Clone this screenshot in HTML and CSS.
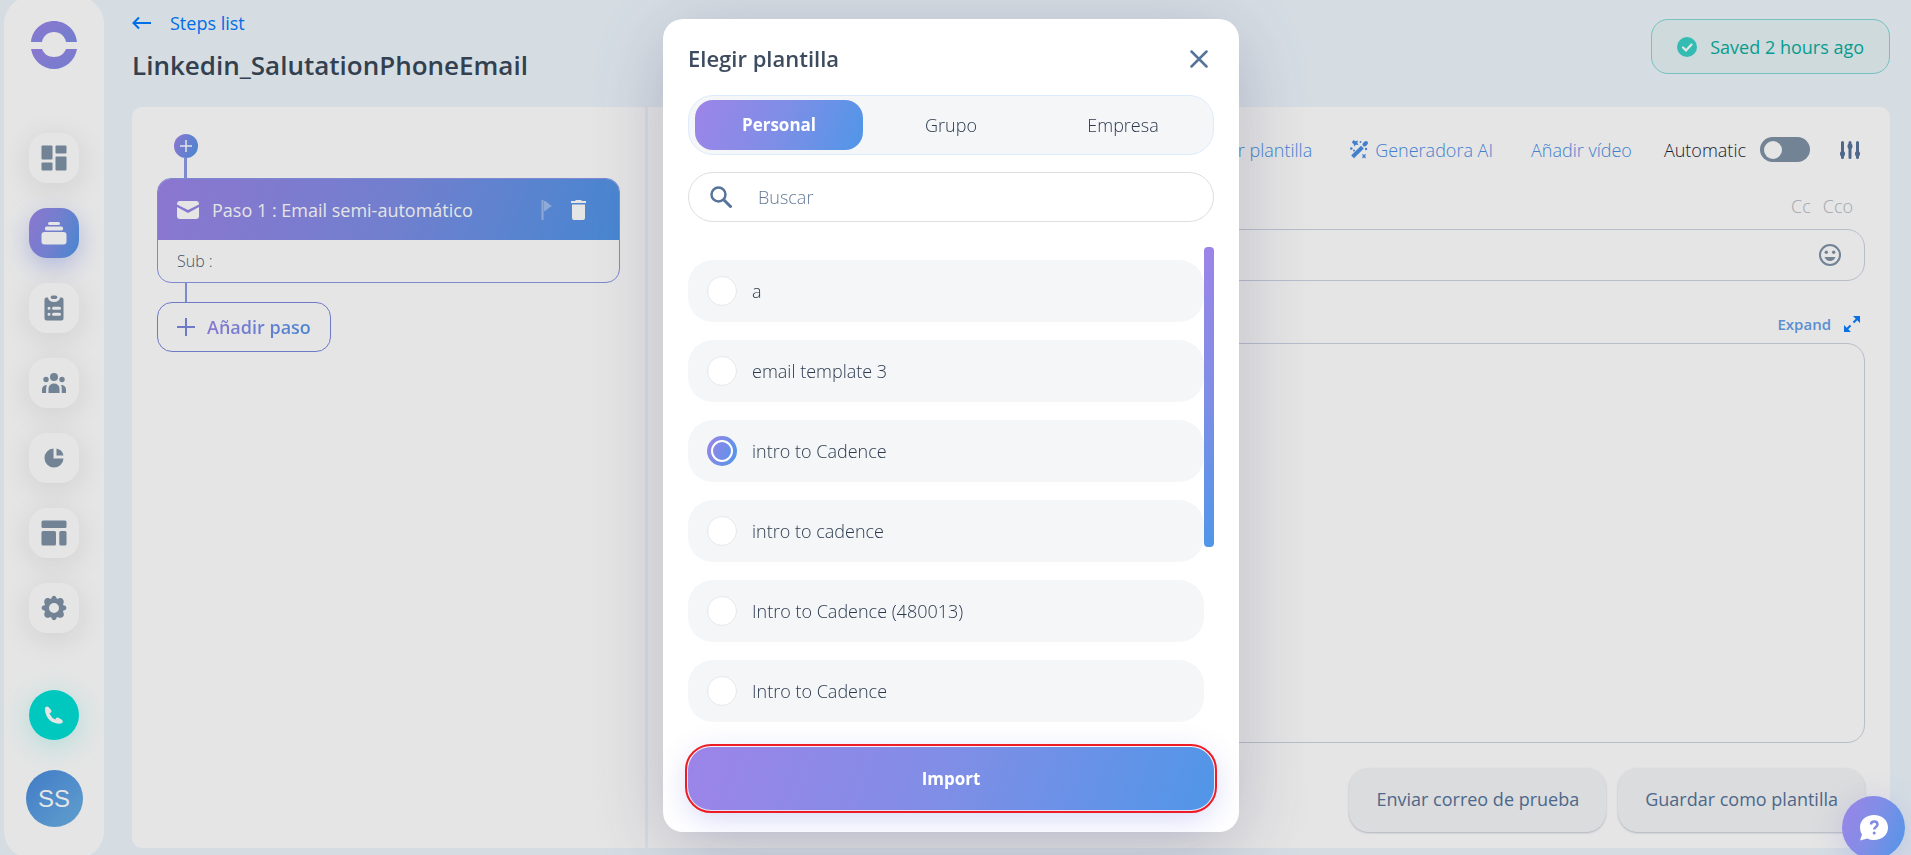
FILE: index.html
```
<!DOCTYPE html>
<html lang="es">
<head>
    <meta charset="UTF-8">
    <meta name="viewport" content="width=device-width, initial-scale=1.0">
    <title>Linkedin_SalutationPhoneEmail</title>
    <link rel="stylesheet" href="styles.css">
</head>
<body>
    <!-- Shared gradient for the icons -->
    <svg class="defs" width="0" height="0" aria-hidden="true">
        <defs>
            <linearGradient id="brand" x1="0" y1="0" x2="1" y2="1">
                <stop offset="0" stop-color="#9c84e8"/>
                <stop offset="1" stop-color="#7f8ee6"/>
            </linearGradient>
        </defs>
    </svg>

    <div class="app">
        <!-- Sidebar -->
        <aside class="sidebar">
            <svg class="logo" width="48" height="48" viewBox="0 0 48 48" fill="url(#brand)">
                <path d="M1 21C2 9 12 0 24 0s22 9 23 21H36c-1-6-6-10-12-10S13 15 12 21z"/>
                <path d="M1 28c2 12 12 20 23 20s21-8 23-20H36c-2 5-6 8-12 8s-10-3-12-8z"/>
            </svg>
            <nav class="nav">
                <a class="nav-item" href="#" aria-label="Panel">
                    <svg width="26" height="26" viewBox="0 0 26 26"><rect x="0.500" y="0.500" width="11" height="14" rx="1"/><rect x="14.500" y="0.500" width="11" height="8" rx="1"/><rect x="0.500" y="17.500" width="11" height="8" rx="1"/><rect x="14.500" y="11.500" width="11" height="14" rx="1"/></svg>
                </a>
                <a class="nav-item active" href="#" aria-label="Cadencias">
                    <svg width="26" height="26" viewBox="0 0 26 26"><rect x="7" y="2" width="12" height="3" rx="1.500"/><rect x="4" y="6.500" width="18" height="4" rx="1.500"/><rect x="0.500" y="12" width="25" height="12.500" rx="3"/></svg>
                </a>
                <a class="nav-item" href="#" aria-label="Tareas">
                    <svg width="26" height="26" viewBox="0 0 26 26"><path fill-rule="evenodd" d="M5.500 2.500H7a6 4.500 0 0 0 12 0h1.500a2 2 0 0 1 2 2v19a2 2 0 0 1-2 2h-15a2 2 0 0 1-2-2v-19a2 2 0 0 1 2-2zM6.500 13.200a1.500 1.500 0 1 0 3 0 1.500 1.500 0 0 0-3 0zM12.500 11.700a1.500 1.500 0 0 0 0 3h6a1.500 1.500 0 0 0 0-3zM6.500 19.200a1.500 1.500 0 1 0 3 0 1.500 1.500 0 0 0-3 0zM12.500 17.700a1.500 1.500 0 0 0 0 3h6a1.500 1.500 0 0 0 0-3z"/><rect x="9.700" y="0.400" width="6.600" height="3.600" rx="1.800"/></svg>
                </a>
                <a class="nav-item" href="#" aria-label="Contactos">
                    <svg width="26" height="26" viewBox="0 0 26 26"><circle cx="13" cy="7" r="4"/><circle cx="5" cy="9.500" r="2.700"/><circle cx="21" cy="9.500" r="2.700"/><path d="M7.500 23v-4.500a5.500 5 0 0 1 11 0V23zM1 23v-3.500C1 17 3 15 6 15c-.8 1.500-.8 3-.8 8zM25 23v-3.500c0-2.500-2-4.500-5-4.500.8 1.500.8 3 .8 8z"/></svg>
                </a>
                <a class="nav-item" href="#" aria-label="Estadísticas">
                    <svg width="26" height="26" viewBox="0 0 26 26"><path d="M12.500 3.500v10h10A9.500 9.500 0 1 1 12.500 3.500z"/><path d="M15.500 3.500a9 9 0 0 1 7 7h-7z"/></svg>
                </a>
                <a class="nav-item" href="#" aria-label="Plantillas">
                    <svg width="26" height="26" viewBox="0 0 26 26"><rect x="0.500" y="0.500" width="25" height="7.500" rx="1.500"/><rect x="0.500" y="11" width="14.500" height="14.500" rx="1.500"/><rect x="18.300" y="11" width="7.200" height="14.500" rx="1.500"/></svg>
                </a>
                <a class="nav-item" href="#" aria-label="Ajustes">
                    <svg width="26" height="26" viewBox="0 0 26 26"><path fill-rule="evenodd" d="M10.700 2.500a2.400 2.400 0 0 1 4.600 0l.7 1.600 1.600-.7c3-1.200 5.800 1.200 5 4.500l-.7 2 1.600.7a2.400 2.400 0 0 1 0 4.700l-1.600.8.7 1.800c1.200 3-1.600 5.700-4.700 4.700l-1.900-.7-.7 1.600a2.400 2.400 0 0 1-4.600 0l-.7-1.600-1.800.7c-3 1-5.800-1.600-4.700-4.700l.6-1.800-1.600-.8a2.400 2.400 0 0 1 0-4.700l1.600-.7-.7-2c-.8-3.300 2-5.700 5-4.500l1.600.7zM13 8a5 5 0 1 0 0 10 5 5 0 0 0 0-10z"/></svg>
                </a>
            </nav>
            <button class="phone" type="button" aria-label="Llamar">
                <svg width="20" height="20" viewBox="0 0 20 20"><path d="M2.500 4.500C4 13 9 17 16 17" fill="none" stroke="#fff" stroke-width="3.600"/><path d="M3 3.500l2.500 2.600M13.500 14.500l3.300 2" stroke="#fff" stroke-width="4" stroke-linecap="round"/></svg>
            </button>
            <button class="avatar" type="button">SS</button>
        </aside>

        <!-- Main content -->
        <main class="main">
            <header class="page-header">
                <div class="page-title">
                    <a class="back" href="#">
                        <svg width="20" height="14" viewBox="0 0 20 14" fill="none" stroke="currentColor" stroke-width="2"><path d="M19 7H2M7 1.500L1.500 7 7 12.500"/></svg>
                        Steps list
                    </a>
                    <h1>Linkedin_SalutationPhoneEmail</h1>
                </div>
                <div class="saved">
                    <svg width="20" height="20" viewBox="0 0 20 20"><circle cx="10" cy="10" r="10" fill="#3ad2c8"/><path d="M6 10.500l3 3 5.500-6" fill="none" stroke="#fff" stroke-width="2.200" stroke-linecap="round"/></svg>
                    Saved 2 hours ago
                </div>
            </header>

            <div class="workspace">
                <!-- Steps -->
                <section class="steps">
                    <button class="insert" type="button" aria-label="Insertar paso">
                        <svg width="14" height="14" viewBox="0 0 14 14" stroke="#fff" stroke-width="1.500"><path d="M7 1v12M1 7h12"/></svg>
                    </button>
                    <div class="connector"></div>
                    <article class="step">
                        <div class="step-head">
                            <svg width="22" height="18" viewBox="0 0 22 18" fill="#fff"><path d="M0 3a3 3 0 0 1 3-3h16a3 3 0 0 1 3 3v.500L11 9 0 3.500z"/><path d="M0 6l11 6 11-6v9a3 3 0 0 1-3 3H3a3 3 0 0 1-3-3z"/></svg>
                            <h2>Paso 1 : Email semi-automático</h2>
                            <svg class="flag" width="12" height="20" viewBox="0 0 12 20"><path d="M1.500 0v20" stroke="#fff" stroke-width="2"/><path d="M3 1c2.500 0 3 2 8 5-5 2.500-5.500 5-8 5z" fill="#fff"/></svg>
                            <button class="trash" type="button" aria-label="Eliminar">
                                <svg width="15" height="20" viewBox="0 0 15 20" fill="#fff"><path d="M0 1h4l1-1h5l1 1h4v2H0zM1 4.500h13V18a2 2 0 0 1-2 2H3a2 2 0 0 1-2-2z"/></svg>
                            </button>
                        </div>
                        <p class="step-body">Sub :</p>
                    </article>
                    <div class="connector thin"></div>
                    <button class="add-step" type="button">
                        <svg width="18" height="18" viewBox="0 0 18 18" stroke="#7b88dd" stroke-width="2"><path d="M9 0v18M0 9h18"/></svg>
                        <span>Añadir paso</span>
                    </button>
                </section>

                <!-- Editor -->
                <section class="editor">
                    <div class="toolbar">
                        <a href="#">Elegir plantilla</a>
                        <a href="#">
                            <svg width="19" height="19" viewBox="0 0 19 19" fill="currentColor"><path d="M4 15.500L11 8.500" stroke="currentColor" stroke-width="4" stroke-linecap="square"/><path d="M14.500 4.500l1.500-1.500" stroke="currentColor" stroke-width="4" stroke-linecap="round"/><path d="M3.500 0l2 1.200L8 .5l-.7 2.300L8.500 5 6 4.800 4 6.500 3.700 4 1.800 2.500zM12 14l2 .8 2-.8-.8 2 .8 2.500-2-1-2 1 .8-2.500z"/><circle cx="1.300" cy="8.500" r="1.300"/><circle cx="4" cy="10.500" r="1"/><circle cx="10.500" cy="2" r="1"/><circle cx="16" cy="9" r="1.200"/></svg>
                            Generadora AI
                        </a>
                        <a href="#">Añadir vídeo</a>
                        <label class="switch">Automatic <input type="checkbox" role="switch"></label>
                        <button class="icon-btn" type="button" aria-label="Opciones">
                            <svg width="20" height="18" viewBox="0 0 20 18" stroke="#58739a" stroke-width="3" stroke-linecap="round"><path d="M2.500 1.500v15M10 1.500v15M17.500 1.500v15"/><path d="M2.500 12.500v.5M10 5v.5M17.500 12.500v.5" stroke-width="5"/></svg>
                        </button>
                    </div>
                    <div class="copies">
                        <button type="button">Cc</button>
                        <button type="button">Cco</button>
                    </div>
                    <div class="subject">
                        <input type="text" aria-label="Asunto">
                        <button class="icon-btn" type="button" aria-label="Emoji">
                            <svg width="22" height="22" viewBox="0 0 22 22"><circle cx="11" cy="11" r="10" fill="none" stroke="#7f92a6" stroke-width="2"/><circle cx="7.300" cy="8.300" r="1.700" fill="#7f92a6"/><circle cx="14.700" cy="8.300" r="1.700" fill="#7f92a6"/><path d="M5.500 13h11c-1 2.700-3 4-5.500 4s-4.500-1.300-5.500-4z" fill="#7f92a6"/></svg>
                        </button>
                    </div>
                    <button class="expand" type="button">
                        Expand
                        <svg width="16" height="16" viewBox="0 0 16 16" fill="#0a7cff" stroke="#0a7cff" stroke-width="2"><path d="M9.500 6.500l4-4M6.500 9.500l-4 4"/><path d="M9 0h7v7zM0 9v7h7z" stroke="none"/></svg>
                    </button>
                    <textarea class="message" aria-label="Mensaje"></textarea>
                    <div class="actions">
                        <button type="button">Enviar correo de prueba</button>
                        <button type="button">Guardar como plantilla</button>
                    </div>
                </section>
            </div>
        </main>
    </div>

    <!-- Template picker -->
    <div class="backdrop">
        <div class="modal" role="dialog" aria-labelledby="modal-title">
            <div class="modal-head">
                <h2 id="modal-title">Elegir plantilla</h2>
                <button class="icon-btn" type="button" aria-label="Cerrar">
                    <svg width="18" height="18" viewBox="0 0 18 18" stroke="#56749a" stroke-width="2.500" stroke-linecap="round"><path d="M1.500 1.500l15 15M16.500 1.500l-15 15"/></svg>
                </button>
            </div>
            <div class="tabs">
                <button class="tab active" type="button">Personal</button>
                <button class="tab" type="button">Grupo</button>
                <button class="tab" type="button">Empresa</button>
            </div>
            <div class="search">
                <svg width="22" height="22" viewBox="0 0 22 22" fill="none" stroke="#56749a"><circle cx="8.500" cy="8.500" r="7" stroke-width="2.500"/><path d="M14 14l6.500 6.500" stroke-width="3" stroke-linecap="round"/></svg>
                <input type="search" placeholder="Buscar" aria-label="Buscar">
            </div>
            <div class="list">
                <div class="options">
                    <label class="option"><input type="radio" name="template">a</label>
                    <label class="option"><input type="radio" name="template">email template 3</label>
                    <label class="option"><input type="radio" name="template" checked>intro to Cadence</label>
                    <label class="option"><input type="radio" name="template">intro to cadence</label>
                    <label class="option"><input type="radio" name="template">Intro to Cadence (480013)</label>
                    <label class="option"><input type="radio" name="template">Intro to Cadence</label>
                </div>
                <div class="scroll-thumb"></div>
            </div>
            <button class="import" type="button">Import</button>
        </div>
    </div>

    <!-- Help -->
    <button class="help" type="button" aria-label="Ayuda">
        <svg width="28" height="26" viewBox="0 0 28 26"><path d="M14 0c8 0 14 5 14 12.500S22 25 14 25c-2.500 0-4.500-.5-6.500-1.500L0 25.500l2-6C.7 17.500 0 15 0 12.500 0 5 6 0 14 0z" fill="#fff"/><path d="M11 9.500c0-4 6.500-4 6.500 0 0 2.500-3.300 2.500-3.300 5" fill="none" stroke="#8189e6" stroke-width="2.500"/><circle cx="14.200" cy="18" r="1.500" fill="#8189e6"/></svg>
    </button>
</body>
</html>
```

FILE: styles.css
```
/* Global Styles */
* {
    box-sizing: border-box;
}

body {
    margin: 0;
    font-family: 'Open Sans', 'Noto Sans', sans-serif;
    font-size: 18px;
    font-weight: 300;
    line-height: 24px;
    color: #2c3a4e;
    background: #eef6fd;
    height: 100vh;
    overflow: hidden;
}

h1, h2, p {
    margin: 0;
}

a {
    color: inherit;
    text-decoration: none;
}

button, input, textarea {
    font: inherit;
    color: inherit;
}

button {
    padding: 0;
    border: none;
    background: none;
    cursor: pointer;
}

svg {
    display: block;
    flex: none;
}

.defs {
    position: absolute;
}

.icon-btn {
    display: flex;
}

.app {
    display: flex;
    gap: 28px;
    height: 100vh;
    padding-left: 4px;
}

/* Sidebar */
.sidebar {
    flex: 0 0 100px;
    margin: -4px 0;
    padding: 25px 0 32px;
    display: flex;
    flex-direction: column;
    align-items: center;
    background: #fff;
    border-radius: 28px;
}

.nav {
    display: flex;
    flex-direction: column;
    gap: 25px;
    margin: 64px 0 auto;
}

.nav-item {
    display: flex;
    align-items: center;
    justify-content: center;
    width: 50px;
    height: 50px;
    border-radius: 18px;
    background: #fff;
    fill: #7f92a6;
    box-shadow: 0 6px 30px rgba(0, 0, 0, 0.1);
}

.nav-item.active {
    background: linear-gradient(110deg, #9c84e8, #7f8ee6 50%, #5096e8);
    fill: #fff;
    box-shadow: 0 8px 24px rgba(110, 130, 230, 0.4);
}

.phone {
    display: flex;
    align-items: center;
    justify-content: center;
    width: 50px;
    height: 50px;
    border-radius: 50%;
    background: #00dfd5;
    box-shadow: 0 6px 30px rgba(0, 223, 213, 0.25);
}

.avatar {
    width: 57px;
    height: 57px;
    margin-top: 30px;
    border-radius: 50%;
    background: linear-gradient(135deg, #4a8add, #6bb2e6);
    color: #fff;
    font-family: 'Liberation Sans', sans-serif;
    font-size: 24px;
}

/* Page header */
.main {
    flex: 1;
    min-width: 0;
    display: flex;
    flex-direction: column;
    padding: 0 21px 7px 0;
}

.page-header {
    display: flex;
    justify-content: space-between;
    align-items: flex-start;
    height: 107px;
    padding-top: 11px;
}

.back {
    display: flex;
    align-items: center;
    gap: 18px;
    color: #007bff;
    font-weight: 500;
}

h1 {
    margin-top: 13px;
    font-size: 26px;
    line-height: 34px;
    font-weight: 600;
    color: #384858;
}

.saved {
    display: flex;
    align-items: center;
    gap: 13px;
    height: 55px;
    margin-top: 8px;
    padding: 0 25px;
    border: 1px solid #82d9d9;
    border-radius: 17px;
    background: #e6f3f5;
    color: #08ae9f;
    font-weight: 500;
}

/* Steps */
.workspace {
    flex: 1;
    display: flex;
    gap: 3px;
    border-radius: 10px;
    overflow: hidden;
}

.steps {
    flex: 0 0 513px;
    padding: 27px 25px;
    background: #fff;
}

.insert {
    display: flex;
    align-items: center;
    justify-content: center;
    width: 24px;
    height: 24px;
    margin-left: 17px;
    border-radius: 50%;
    background: linear-gradient(110deg, #9c84e8, #5096e8);
}

.connector {
    width: 3px;
    height: 20px;
    margin-left: 27px;
    background: #8c9ae6;
}

.connector.thin {
    width: 2px;
    height: 19px;
    margin-left: 28px;
}

.step {
    border: 1px solid #8c98e6;
    border-radius: 14px;
    overflow: hidden;
}

.step-head {
    display: flex;
    align-items: center;
    height: 61px;
    padding: 0 33px 0 19px;
    background: linear-gradient(110deg, #9c84e8, #7f8ee6 50%, #5096e8);
    color: #fff;
}

.step-head h2 {
    flex: 1;
    margin-left: 13px;
    font-size: 18px;
    font-weight: 500;
}

.flag {
    opacity: 0.4;
}

.trash {
    margin-left: 18px;
}

.step-body {
    padding: 9px 19px;
    font-size: 16px;
    color: #4a5e76;
}

.add-step {
    display: flex;
    align-items: center;
    gap: 12px;
    height: 50px;
    padding: 0 19px;
    border: 1px solid #7b88dd;
    border-radius: 15px;
    font-weight: 600;
}

.add-step span {
    background: linear-gradient(110deg, #9c84e8, #5096e8);
    background-clip: text;
    color: transparent;
}

/* Editor */
.editor {
    flex: 1;
    display: flex;
    flex-direction: column;
    padding: 30px 25px 16px;
    background: #fff;
}

.toolbar {
    display: flex;
    align-items: center;
    justify-content: flex-end;
    padding-right: 5px;
    gap: 38px;
    color: #4a8fe6;
}

.toolbar a {
    display: flex;
    align-items: center;
    gap: 6px;
}

.switch {
    display: flex;
    align-items: center;
    gap: 14px;
    margin-left: -6px;
    margin-right: -8px;
    color: #1c2536;
}

.switch input {
    appearance: none;
    display: flex;
    align-items: center;
    width: 50px;
    height: 25px;
    margin: 0;
    padding: 4px;
    border-radius: 13px;
    background: #7f92a6;
}

.switch input::before {
    content: '';
    width: 18px;
    height: 18px;
    border-radius: 50%;
    background: #fff;
}

.copies {
    display: flex;
    justify-content: flex-end;
    gap: 12px;
    margin: 32px 12px 11px;
    color: #b4b9c2;
}

.subject {
    display: flex;
    align-items: center;
    height: 52px;
    padding: 0 23px;
    border: 1px solid #ccd3e0;
    border-radius: 18px;
}

.subject input {
    flex: 1;
    border: none;
    outline: none;
    background: none;
}

.expand {
    display: flex;
    align-items: center;
    align-self: flex-end;
    gap: 13px;
    margin: 31px 5px 7px;
    font-size: 15px;
    font-weight: 600;
    color: #65a0ea;
}

.message {
    flex: 1;
    border: 1px solid #ccd3e0;
    border-radius: 18px;
    background: none;
    resize: none;
}

.actions {
    display: flex;
    justify-content: flex-end;
    gap: 12px;
    margin-top: 25px;
}

.actions button {
    height: 64px;
    padding: 0 27px 2px;
    border-radius: 20px;
    background: #f4f5f7;
    box-shadow: 0 1px 2px rgba(60, 70, 110, 0.3);
    color: #56749a;
    font-weight: 500;
}

/* Modal */
.backdrop {
    position: fixed;
    inset: 0;
    display: flex;
    align-items: center;
    justify-content: center;
    padding: 0 9px 4px 0;
    background: rgba(0, 0, 0, 0.1);
}

.modal {
    width: 576px;
    padding: 25px;
    padding-bottom: 22px;
    border-radius: 20px;
    background: #fff;
    box-shadow: 0 16px 80px rgba(60, 60, 105, 0.25);
}

.modal-head {
    display: flex;
    align-items: center;
    justify-content: space-between;
    padding-right: 6px;
    height: 30px;
}

.modal-head h2 {
    padding-bottom: 3px;
    font-size: 22px;
    font-weight: 600;
    color: #3d4b5e;
}

.tabs {
    display: flex;
    gap: 4px;
    height: 60px;
    margin-top: 21px;
    padding: 4px 6px;
    border: 1px solid #dcecfd;
    border-radius: 25px;
    background: #f4f6f8;
}

.tab {
    flex: 1;
    border-radius: 18px;
}

.tab.active {
    background: linear-gradient(110deg, #9c84e8, #7f8ee6 50%, #5096e8);
    color: #fff;
    font-size: 17px;
    font-weight: 700;
}

.search {
    display: flex;
    align-items: center;
    gap: 26px;
    height: 50px;
    margin-top: 17px;
    padding: 0 21px;
    border: 1px solid #dcdee0;
    border-radius: 25px;
}

.search input {
    flex: 1;
    padding: 0;
    border: none;
    outline: none;
    background: none;
}

.search input::placeholder {
    color: #647b96;
}

.list {
    display: flex;
    align-items: flex-start;
    margin-top: 25px;
}

.options {
    flex: 1;
    display: flex;
    flex-direction: column;
    gap: 18px;
    padding-top: 13px;
}

.option {
    display: flex;
    align-items: center;
    gap: 15px;
    height: 62px;
    padding: 0 19px;
    border-radius: 25px;
    background: #f4f6f8;
}

.option input {
    appearance: none;
    width: 30px;
    height: 30px;
    margin: 0;
    border: 1px solid #e6e8eb;
    border-radius: 50%;
    background: #fff;
}

.option input:checked {
    display: flex;
    align-items: center;
    justify-content: center;
    border: none;
    background: linear-gradient(110deg, #9c84e8, #5096e8);
}

.option input:checked::before {
    content: '';
    width: 18px;
    height: 18px;
    border: 2px solid #fff;
    border-radius: 50%;
}

.scroll-thumb {
    width: 10px;
    height: 300px;
    border-radius: 4px;
    background: linear-gradient(170deg, #9c84e8, #7f8ee6 50%, #5096e8);
}

.import {
    display: block;
    width: 100%;
    height: 63px;
    margin-top: 25px;
    border-radius: 23px;
    outline: 2px solid #ee1c24;
    outline-offset: 1px;
    background: linear-gradient(110deg, #9c84e8, #7f8ee6 50%, #5096e8);
    box-shadow: 0 8px 30px rgba(110, 120, 230, 0.3);
    color: #fff;
    font-size: 17px;
    font-weight: 700;
}

/* Help button */
.help {
    position: fixed;
    right: 6px;
    bottom: -4px;
    display: flex;
    align-items: center;
    justify-content: center;
    width: 63px;
    height: 63px;
    border-radius: 50%;
    background: linear-gradient(110deg, #9c84e8, #7f8ee6 50%, #5096e8);
    box-shadow: 0 6px 30px rgba(110, 120, 230, 0.25);
}
```
